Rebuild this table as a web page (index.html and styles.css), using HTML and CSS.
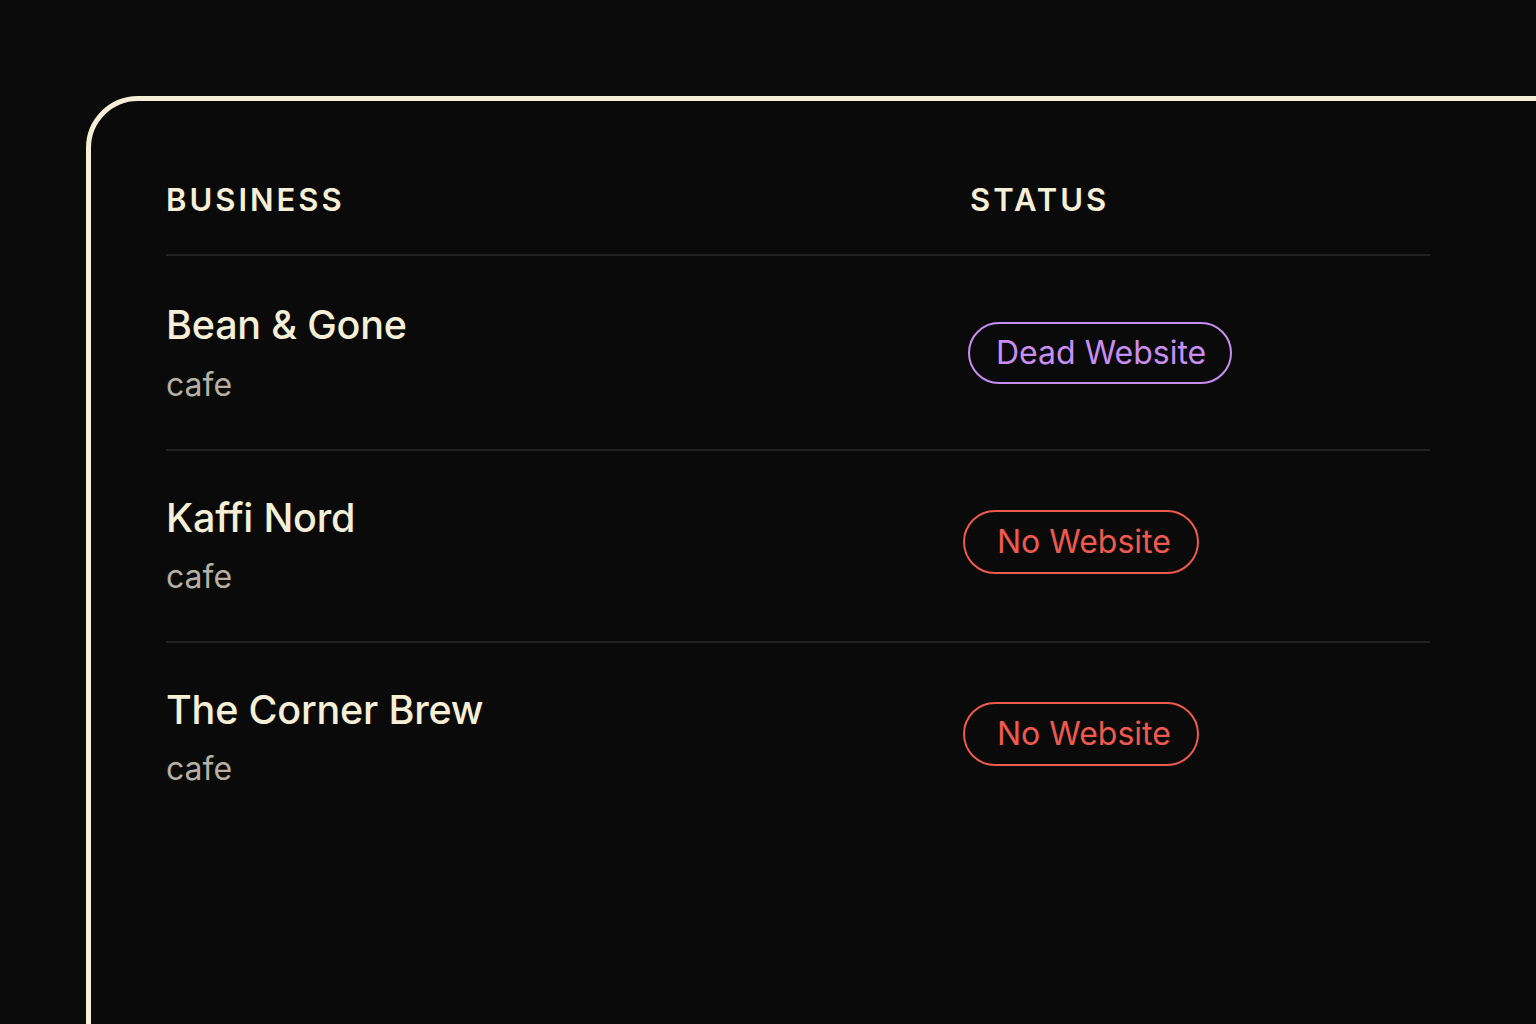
FILE: index.html
```html
<!DOCTYPE html>
<html>
<head>
<meta charset="utf-8">
<link rel="stylesheet" href="styles.css">
</head>
<body>
<div class="card">
  <div class="table">
    <div class="row head">
      <div class="col-biz">BUSINESS</div>
      <div class="col-status">STATUS</div>
    </div>
    <div class="row r1">
      <div class="col-biz">
        <div class="name">Bean &amp; Gone</div>
        <div class="type">cafe</div>
      </div>
      <div class="col-status"><span class="badge dead">Dead Website</span></div>
    </div>
    <div class="row">
      <div class="col-biz">
        <div class="name">Kaffi Nord</div>
        <div class="type">cafe</div>
      </div>
      <div class="col-status"><span class="badge none">No Website</span></div>
    </div>
    <div class="row last">
      <div class="col-biz">
        <div class="name">The Corner Brew</div>
        <div class="type">cafe</div>
      </div>
      <div class="col-status"><span class="badge none">No Website</span></div>
    </div>
  </div>
</div>
</body>
</html>
```
FILE: styles.css
```css
html, body {
  margin: 0;
  padding: 0;
  background: #0b0b0b;
  overflow: hidden;
  height: 1024px;
}
body {
  font-family: Inter, "Noto Sans", sans-serif;
  color: #f4efd6;
}
.card {
  margin-top: 96px;
  margin-left: 86px;
  width: 1600px;
  height: 1000px;
  border: 5px solid #f4efd6;
  border-radius: 52px 0 0 0;
  background: #0a0a0a;
  padding: 0 0 0 75px;
  box-sizing: border-box;
}
.table {
  width: 1264px;
}
.row {
  display: grid;
  grid-template-columns: 804px 1fr;
  align-items: start;
  height: 192px;
  box-sizing: border-box;
  border-bottom: 2px solid #222221;
}
.row.r1 {
  height: 195px;
}
.row.last {
  border-bottom: none;
}
.row.head {
  height: 155px;
  padding-top: 81px;
  font-size: 31px;
  font-weight: 600;
  letter-spacing: 3px;
  line-height: 36px;
}
.row .col-biz {
  padding-top: 44px;
}
.row.r1 .col-biz {
  padding-top: 46px;
}
.row.head .col-biz {
  padding-top: 0;
}
.name {
  font-size: 39.5px;
  font-weight: 500;
  line-height: 46px;
  letter-spacing: -0.2px;
}
.type {
  margin-top: 18px;
  font-size: 32px;
  line-height: 36px;
  color: #b5b0a3;
}
.r1 .type {
  margin-top: 19px;
}
.badge {
  display: inline-block;
  border: 2px solid;
  border-radius: 34px;
  font-size: 32px;
  line-height: 40px;
  font-weight: 400;
}
.badge.dead {
  color: #c98ef2;
  border-color: #c98ef2;
  margin-left: -2px;
  margin-top: 66px;
  padding: 9px 24px 9px 26px;
}
.badge.none {
  color: #ef5a4e;
  border-color: #ef5a4e;
  margin-left: -7px;
  margin-top: 59px;
  padding: 10px 26px 10px 32px;
}
```
